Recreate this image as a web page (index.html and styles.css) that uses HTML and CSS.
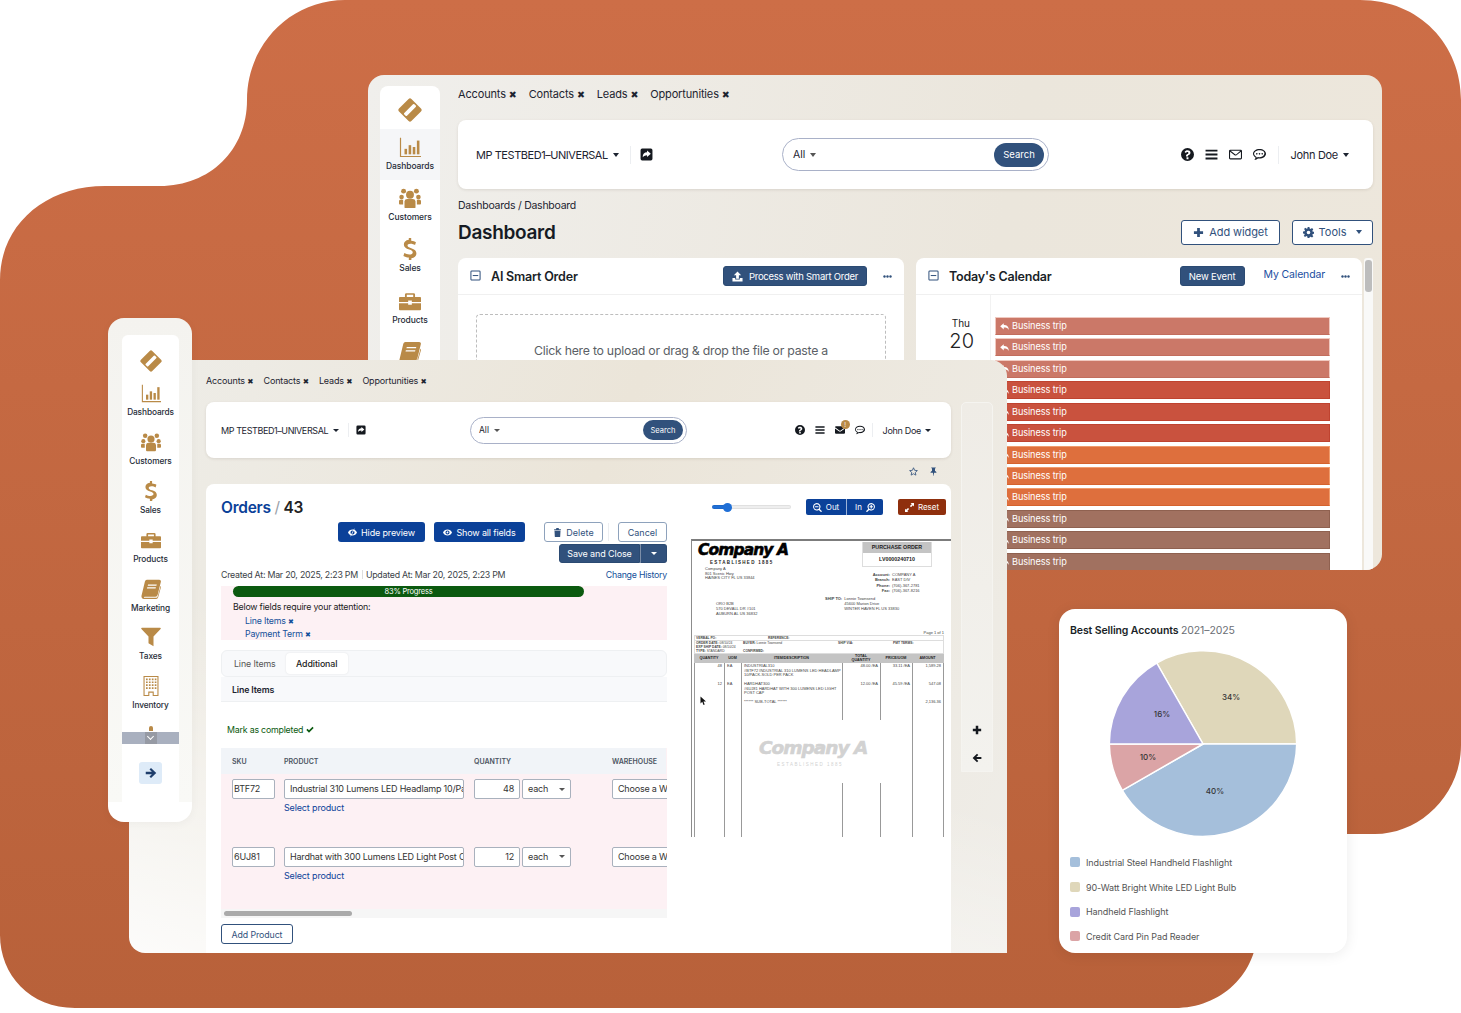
FILE: index.html
```html
<!DOCTYPE html>
<html lang="en">
<head>
    <meta charset="UTF-8">
    <title>Orders and Dashboard</title>
    <link rel="stylesheet" href="styles.css">
</head>
<body>
    <svg class="defs" width="0" height="0">
        <symbol id="i-logo" viewBox="0 0 24 24">
            <path fill-rule="evenodd" d="M13.4 1 23 10.6a2 2 0 0 1 0 2.8L13.4 23a2 2 0 0 1-2.8 0L1 13.4a2 2 0 0 1 0-2.8L10.6 1a2 2 0 0 1 2.8 0ZM15 6.300 6.300 15a1 1 0 0 0 0 1.400l1.300 1.300a1 1 0 0 0 1.400 0L17.700 9a1 1 0 0 0 0-1.400l-1.300-1.300a1 1 0 0 0-1.400 0Z"/>
        </symbol>
        <symbol id="i-chart" viewBox="0 0 24 24">
            <path d="M1 2h1.300v19.700H24V23H1Z"/><rect x="6" y="14" width="2.800" height="6"/><rect x="10.500" y="10" width="2.800" height="10"/><rect x="15" y="12" width="2.800" height="8"/><rect x="19.500" y="5" width="2.800" height="15"/>
        </symbol>
        <symbol id="i-users" viewBox="0 0 24 24">
            <circle cx="12" cy="8.500" r="4.300"/><circle cx="5" cy="4.500" r="2.700"/><circle cx="19" cy="4.500" r="2.700"/><circle cx="2.800" cy="11" r="2.500"/><circle cx="21.200" cy="11" r="2.500"/>
            <path d="M6 15.500a3 3 0 0 1 3-2.500h6a3 3 0 0 1 3 2.500V22a1 1 0 0 1-1 1H7a1 1 0 0 1-1-1Z"/><path d="M0 15.500c0-1 1-1.500 2-1.500h2.500v5H1a1 1 0 0 1-1-1ZM24 15.500c0-1-1-1.500-2-1.500h-2.500v5H23a1 1 0 0 0 1-1Z"/>
        </symbol>
        <symbol id="i-dollar" viewBox="0 0 24 24">
            <path d="M10.700 0h2.600v3c2.300.2 4 .8 5.200 1.500l-1 3.200c-1.300-.7-3-1.400-5-1.400-2.200 0-3.200.9-3.200 2 0 1.300 1.200 2 4 2.900 3.900 1.200 5.700 2.900 5.700 5.600 0 2.600-1.800 4.800-5.500 5.300V24h-2.800v-2.700c-2.300-.1-4.500-.8-5.900-1.700l1-3.200c1.500.9 3.500 1.600 5.500 1.600 2.300 0 3.700-1 3.700-2.300 0-1.400-1.200-2.200-3.900-3.100-3.700-1.200-5.800-2.800-5.800-5.500 0-2.500 1.800-4.600 5.400-5.100Z"/>
        </symbol>
        <symbol id="i-case" viewBox="0 0 24 24">
            <path fill-rule="evenodd" d="M8 3.500h8a1.500 1.500 0 0 1 1.500 1.500v2.500H23a1 1 0 0 1 1 1V13H14v-1.500h-4V13H0V8.500a1 1 0 0 1 1-1h5.500V5A1.500 1.500 0 0 1 8 3.500Zm.5 1.800v2.200h7V5.300Z"/>
            <path d="M0 14.500h10V16h4v-1.500h10V21a1 1 0 0 1-1 1H1a1 1 0 0 1-1-1Z"/>
        </symbol>
        <symbol id="i-book" viewBox="0 0 24 24">
            <path fill-rule="evenodd" d="M7 1h15a2 2 0 0 1 1.800 2.500L20 19a3 3 0 0 1-2.800 2.300H4.500c-1 0-1.500 1.100-.5 1.200h14.500a1.500 1.500 0 0 0 1.400-1.100l3.600-13 .5.300v1l-3.500 12.500A2.500 2.500 0 0 1 18 24H3.500C1.500 24 .2 22 .6 20L4.700 3A3 3 0 0 1 7 1Zm1.500 5.500-.4 1.500h10.400l.4-1.500Zm-1 3.500-.4 1.500h10.400l.4-1.500Z"/>
        </symbol>
        <symbol id="i-funnel" viewBox="0 0 24 24">
            <path d="M1 1h22a.8.8 0 0 1 .5 1.400L15 11.500V23l-6-3.500v-8L.5 2.400A.8.8 0 0 1 1 1Z"/>
        </symbol>
        <symbol id="i-building" viewBox="0 0 24 24">
            <path fill-rule="evenodd" d="M3 0h18v24h-7v-4h-4v4H3Zm1.300 1.300v21.400h4.400V18.700h6.600v4h4.400V1.300Z"/>
            <path d="M6 3h2v2H6Zm3.500 0h2v2h-2Zm3.500 0h2v2h-2Zm3.500 0h2v2h-2ZM6 6.500h2v2H6Zm3.500 0h2v2h-2Zm3.500 0h2v2h-2Zm3.500 0h2v2h-2ZM6 10h2v2H6Zm3.500 0h2v2h-2Zm3.500 0h2v2h-2Zm3.500 0h2v2h-2ZM6 13.500h2v2H6Zm3.500 0h2v2h-2Zm3.500 0h2v2h-2Zm3.500 0h2v2h-2Z"/>
        </symbol>
        <symbol id="i-question" viewBox="0 0 24 24">
            <path fill-rule="evenodd" d="M12 0a12 12 0 1 1 0 24 12 12 0 0 1 0-24Zm-1.800 17v3.600h3.600V17Zm1.900-12.700c-2.500 0-4.400 1.200-5.500 3l2.400 1.800c.7-.9 1.500-1.500 2.800-1.500 1 0 1.900.6 1.900 1.500 0 1-.8 1.400-1.800 2-1.300.7-2.700 1.600-2.700 3.700v.7h3.600c0-1.300.3-1.800 1.500-2.500 1.600-.9 3.200-2 3.200-4.300 0-3-3-4.400-5.400-4.400Z"/>
        </symbol>
        <symbol id="i-bars" viewBox="0 0 24 24">
            <path d="M1 3h22v3.600H1Zm0 7.200h22v3.600H1Zm0 7.200h22V21H1Z"/>
        </symbol>
        <symbol id="i-mail" viewBox="0 0 24 24">
            <path fill-rule="evenodd" d="M2.500 3h19A2.500 2.500 0 0 1 24 5.500v13a2.500 2.500 0 0 1-2.500 2.500h-19A2.500 2.500 0 0 1 0 18.500v-13A2.500 2.500 0 0 1 2.500 3Zm-.5 3.700v11.800c0 .3.200.5.500.5h19c.3 0 .5-.2.500-.5V6.700l-8.200 6.500a3 3 0 0 1-3.600 0Zm1-1.700 8.900 6.800a1 1 0 0 0 1.200 0L21 5Z"/>
        </symbol>
        <symbol id="i-mail-solid" viewBox="0 0 24 24">
            <path d="M2.500 3h19A2.500 2.500 0 0 1 24 5.500L13.500 13a2.500 2.500 0 0 1-3 0L0 5.500A2.500 2.500 0 0 1 2.500 3Z"/><path d="M0 8.300 9.500 15a4 4 0 0 0 5 0L24 8.300v10.200a2.500 2.500 0 0 1-2.500 2.500h-19A2.500 2.500 0 0 1 0 18.500Z"/>
        </symbol>
        <symbol id="i-chat" viewBox="0 0 24 24">
            <path fill-rule="evenodd" d="M12 2c6.600 0 12 3.900 12 8.800s-5.400 8.800-12 8.800c-1 0-2-.1-2.900-.3C7.500 20.900 5.500 22 2.500 22c1.300-1.400 2-2.800 2.200-4.500C1.900 15.900 0 13.500 0 10.800 0 5.900 5.400 2 12 2Zm0 2c-5.700 0-10 3.100-10 6.800 0 2.200 1.500 4 3.800 5.200l1 .5v1.100c0 .3 0 .5-.1.800 1-.6 1.600-1.300 1.900-1.900l3 .4h1c4.900-.2 8.400-3.100 8.400-6.600C22 7.100 17.700 4 12 4Z"/><circle cx="7" cy="10.800" r="1.500"/><circle cx="12" cy="10.800" r="1.500"/><circle cx="17" cy="10.800" r="1.500"/>
        </symbol>
        <symbol id="i-share" viewBox="0 0 24 24">
            <path fill-rule="evenodd" d="M4 1h16a3 3 0 0 1 3 3v16a3 3 0 0 1-3 3H4a3 3 0 0 1-3-3V4a3 3 0 0 1 3-3Zm9 3.500V8C8 8.200 5 11 5 17c.3.200 1.300-3.300 8-3.800v3.300l7-6Z"/>
        </symbol>
        <symbol id="i-minus-box" viewBox="0 0 24 24">
            <path fill="none" stroke="currentColor" stroke-width="2.200" d="M4 2h16a2 2 0 0 1 2 2v16a2 2 0 0 1-2 2H4a2 2 0 0 1-2-2V4a2 2 0 0 1 2-2Z"/><path d="M6 11h12v2.200H6Z"/>
        </symbol>
        <symbol id="i-upload" viewBox="0 0 24 24">
            <path d="M12 1 20 9h-5v8H9V9H4Z"/><path d="M1 15h6v3.500h10V15h6v8H1Z"/>
        </symbol>
        <symbol id="i-dots" viewBox="0 0 24 8">
            <circle cx="4" cy="4" r="3.200"/><circle cx="12" cy="4" r="3.200"/><circle cx="20" cy="4" r="3.200"/>
        </symbol>
        <symbol id="i-plus" viewBox="0 0 24 24">
            <path d="M9 2h6v7h7v6h-7v7H9v-7H2V9h7Z"/>
        </symbol>
        <symbol id="i-gear" viewBox="0 0 24 24">
            <path fill-rule="evenodd" d="M10 0h4l.6 3.500 2.100.9L19.600 2.300l2.800 2.800-2 2.900.9 2.100 3.500.6v4l-3.500.6-.9 2.100 2.100 2.900-2.800 2.800-2.900-2.100-2.100.9L14 24h-4l-.6-3.500-2.100-.9-2.900 2.100-2.800-2.800L3.700 17l-.9-2.100L0 14v-4l3.500-.6.9-2.100-2.100-2.900 2.800-2.800 2.900 2.100 2.100-.9ZM12 8a4 4 0 1 0 0 8 4 4 0 0 0 0-8Z"/>
        </symbol>
        <symbol id="i-reply" viewBox="0 0 24 24">
            <path d="M10 3v5c7.500 0 13 3 13.500 13-2.500-5-6-6.500-13.500-6.500V20L.5 11.500Z"/>
        </symbol>
        <symbol id="i-eye" viewBox="0 0 24 24">
            <path fill-rule="evenodd" d="M12 4c5.500 0 9.800 3.400 12 8-2.200 4.600-6.500 8-12 8S2.200 16.600 0 12c2.200-4.600 6.500-8 12-8Zm0 2.500a5.500 5.500 0 1 0 0 11 5.500 5.500 0 0 0 0-11Zm-.5 2a3 3 0 1 1-3 3c.3 1 2.600.5 3-3Z"/>
        </symbol>
        <symbol id="i-eye-off" viewBox="0 0 24 24">
            <path fill-rule="evenodd" d="M12 4c5.500 0 9.800 3.400 12 8-2.200 4.600-6.500 8-12 8S2.200 16.600 0 12c2.200-4.600 6.500-8 12-8Zm0 2.500a5.500 5.500 0 1 0 0 11 5.500 5.500 0 0 0 0-11Z"/>
            <path fill="none" stroke="currentColor" stroke-width="2" d="M17 2 7 22"/>
        </symbol>
        <symbol id="i-trash" viewBox="0 0 24 24">
            <path d="M9 0h6l1 3h5v3H3V3h5Z"/><path d="M4 7.500h16l-.8 15a1.500 1.500 0 0 1-1.500 1.500H6.300a1.500 1.500 0 0 1-1.500-1.500Z"/>
        </symbol>
        <symbol id="i-zoom-out" viewBox="0 0 24 24">
            <path fill-rule="evenodd" d="M10 0a10 10 0 0 1 8 16l6 6-2.500 2.500-6-6A10 10 0 1 1 10 0Zm0 3a7 7 0 1 0 0 14 7 7 0 0 0 0-14ZM5.500 8.500h9v3h-9Z"/>
        </symbol>
        <symbol id="i-zoom-in" viewBox="0 0 24 24">
            <path fill-rule="evenodd" d="M14 0a10 10 0 0 0-8 16l-6 6 2.500 2.500 6-6A10 10 0 1 0 14 0Zm0 3a7 7 0 1 1 0 14 7 7 0 0 1 0-14Zm-1.500 2.500h3v3h3v3h-3v3h-3v-3h-3v-3h3Z"/>
        </symbol>
        <symbol id="i-expand" viewBox="0 0 24 24">
            <path d="M24 0v9l-3-3-5 5-3-3 5-5-3-3ZM0 24v-9l3 3 5-5 3 3-5 5 3 3Z"/>
        </symbol>
        <symbol id="i-star" viewBox="0 0 24 24">
            <path fill="none" stroke="currentColor" stroke-width="2.200" stroke-linejoin="round" d="m12 2 3 6.800 7.300.8-5.500 4.900 1.600 7.200L12 18l-6.400 3.700 1.600-7.200L1.700 9.600 9 8.800Z"/>
        </symbol>
        <symbol id="i-pin" viewBox="0 0 24 24">
            <path d="M6 1h12v2.500h-2v7c2.500 1 4 2.700 4 5H13.500L12.300 24h-.6l-1.200-8.500H4c0-2.300 1.500-4 4-5v-7H6Z"/>
        </symbol>
        <symbol id="i-arrow" viewBox="0 0 24 24">
            <path d="M12 2 22.500 12 12 22l-3-3 4.700-4.700H1.500V9.700h12.200L9 5Z"/>
        </symbol>
        <symbol id="i-check" viewBox="0 0 24 24">
            <path d="M9 20 1 12l3.500-3.500L9 13 19.500 2.500 23 6Z"/>
        </symbol>
    </svg>

    <div class="stage">
        <svg class="blob" width="1461" height="1008" viewBox="0 0 1461 1008">
            <defs>
                <linearGradient id="blobFill" x1="0" y1="0" x2="0" y2="1">
                    <stop offset="0" stop-color="#cd6e47"/>
                    <stop offset="1" stop-color="#b8613a"/>
                </linearGradient>
            </defs>
            <path fill="url(#blobFill)" d="M345 0H1360C1420 0 1461 45 1461 100V745C1461 795 1420 834 1375 834H1295C1272 834 1258 850 1258 872V925C1258 975 1220 1008 1175 1008H75C30 1008 0 975 0 935V280C0 225 45 186 105 186H160C210 186 247 150 247 100C247 45 290 0 345 0Z"/>
        </svg>

        <!-- back window: dashboard -->
        <section class="window win-back">
            <nav class="rail">
                <div class="rail-logo"><svg class="ic-logo"><use href="#i-logo"/></svg></div>
                <a class="rail-item is-active"><svg class="ic-nav"><use href="#i-chart"/></svg>Dashboards</a>
                <a class="rail-item"><svg class="ic-nav"><use href="#i-users"/></svg>Customers</a>
                <a class="rail-item"><svg class="ic-nav"><use href="#i-dollar"/></svg>Sales</a>
                <a class="rail-item"><svg class="ic-nav"><use href="#i-case"/></svg>Products</a>
                <a class="rail-item"><svg class="ic-nav"><use href="#i-book"/></svg>Marketing</a>
            </nav>
            <div class="win-main">
                <div class="tabs">
                    <span class="tab">Accounts <i class="x">✖</i></span>
                    <span class="tab">Contacts <i class="x">✖</i></span>
                    <span class="tab">Leads <i class="x">✖</i></span>
                    <span class="tab">Opportunities <i class="x">✖</i></span>
                </div>
                <header class="topbar">
                    <div class="topbar-left">
                        <span class="org">MP TESTBED1–UNIVERSAL</span><i class="caret"></i>
                        <span class="vsep"></span>
                        <svg class="ic-top"><use href="#i-share"/></svg>
                    </div>
                    <div class="searchbox">
                        <span class="search-scope">All</span><i class="caret"></i>
                        <button class="search-btn">Search</button>
                    </div>
                    <div class="topbar-right">
                        <svg class="ic-top"><use href="#i-question"/></svg>
                        <svg class="ic-top"><use href="#i-bars"/></svg>
                        <svg class="ic-top"><use href="#i-mail"/></svg>
                        <svg class="ic-top"><use href="#i-chat"/></svg>
                        <span class="vsep"></span>
                        <span class="user">John Doe</span><i class="caret"></i>
                    </div>
                </header>
                <div class="crumbs">Dashboards / Dashboard</div>
                <div class="title-row">
                    <h1 class="page-title">Dashboard</h1>
                    <button class="btn-line btn-widget"><svg class="ic-btn"><use href="#i-plus"/></svg>Add widget</button>
                    <button class="btn-line btn-tools"><svg class="ic-btn"><use href="#i-gear"/></svg>Tools<i class="caret"></i></button>
                </div>
                <div class="widgets">
                    <div class="widget">
                        <div class="widget-head">
                            <svg class="ic-min"><use href="#i-minus-box"/></svg>
                            <h2 class="widget-title">AI Smart Order</h2>
                            <button class="btn-navy btn-process"><svg class="ic-upload"><use href="#i-upload"/></svg>Process with Smart Order</button>
                            <svg class="ic-dots"><use href="#i-dots"/></svg>
                        </div>
                        <div class="dropzone">Click here to upload or drag &amp; drop the file or paste a</div>
                    </div>
                    <div class="widget">
                        <div class="widget-head">
                            <svg class="ic-min"><use href="#i-minus-box"/></svg>
                            <h2 class="widget-title">Today's Calendar</h2>
                            <button class="btn-navy btn-event">New Event</button>
                            <a class="cal-link">My Calendar</a>
                            <svg class="ic-dots"><use href="#i-dots"/></svg>
                        </div>
                        <div class="cal-body">
                            <div class="cal-date"><span class="cal-day">Thu</span><span class="cal-num">20</span></div>
                            <div class="cal-events">
                                <div class="event ev-a"><svg class="ic-reply"><use href="#i-reply"/></svg>Business trip</div>
                                <div class="event ev-a"><svg class="ic-reply"><use href="#i-reply"/></svg>Business trip</div>
                                <div class="event ev-a"><svg class="ic-reply"><use href="#i-reply"/></svg>Business trip</div>
                                <div class="event ev-b"><svg class="ic-reply"><use href="#i-reply"/></svg>Business trip</div>
                                <div class="event ev-b"><svg class="ic-reply"><use href="#i-reply"/></svg>Business trip</div>
                                <div class="event ev-b"><svg class="ic-reply"><use href="#i-reply"/></svg>Business trip</div>
                                <div class="event ev-c"><svg class="ic-reply"><use href="#i-reply"/></svg>Business trip</div>
                                <div class="event ev-c"><svg class="ic-reply"><use href="#i-reply"/></svg>Business trip</div>
                                <div class="event ev-c"><svg class="ic-reply"><use href="#i-reply"/></svg>Business trip</div>
                                <div class="event ev-d"><svg class="ic-reply"><use href="#i-reply"/></svg>Business trip</div>
                                <div class="event ev-d"><svg class="ic-reply"><use href="#i-reply"/></svg>Business trip</div>
                                <div class="event ev-d"><svg class="ic-reply"><use href="#i-reply"/></svg>Business trip</div>
                            </div>
                        </div>
                    </div>
                    <div class="vscroll"><span class="vscroll-thumb"></span></div>
                </div>
            </div>
        </section>

        <!-- front window: order -->
        <section class="window win-front">
            <div class="win-main">
                <div class="tabs">
                    <span class="tab">Accounts <i class="x">✖</i></span>
                    <span class="tab">Contacts <i class="x">✖</i></span>
                    <span class="tab">Leads <i class="x">✖</i></span>
                    <span class="tab">Opportunities <i class="x">✖</i></span>
                </div>
                <header class="topbar">
                    <div class="topbar-left">
                        <span class="org">MP TESTBED1–UNIVERSAL</span><i class="caret"></i>
                        <span class="vsep"></span>
                        <svg class="ic-top"><use href="#i-share"/></svg>
                    </div>
                    <div class="searchbox">
                        <span class="search-scope">All</span><i class="caret"></i>
                        <button class="search-btn">Search</button>
                    </div>
                    <div class="topbar-right">
                        <svg class="ic-top"><use href="#i-question"/></svg>
                        <svg class="ic-top"><use href="#i-bars"/></svg>
                        <span class="mail-wrap"><svg class="ic-top"><use href="#i-mail-solid"/></svg><b class="badge">!</b></span>
                        <svg class="ic-top"><use href="#i-chat"/></svg>
                        <span class="vsep"></span>
                        <span class="user">John Doe</span><i class="caret"></i>
                    </div>
                </header>
                <div class="pin-row">
                    <svg class="ic-pin"><use href="#i-star"/></svg>
                    <svg class="ic-pin"><use href="#i-pin"/></svg>
                </div>
                <div class="order-card">
                    <div class="order-form">
                        <h1 class="order-title"><a>Orders</a> <span class="slash">/</span> 43</h1>
                        <div class="action-row">
                            <button class="btn-blue btn-hide"><svg class="ic-small"><use href="#i-eye-off"/></svg>Hide preview</button>
                            <button class="btn-blue btn-fields"><svg class="ic-small"><use href="#i-eye"/></svg>Show all fields</button>
                            <button class="btn-line btn-delete"><svg class="ic-small"><use href="#i-trash"/></svg>Delete</button>
                            <span class="action-sep"></span>
                            <button class="btn-line btn-cancel">Cancel</button>
                        </div>
                        <div class="save-row">
                            <button class="btn-navy btn-save">Save and Close</button>
                            <button class="btn-navy btn-more"><i class="caret"></i></button>
                        </div>
                        <div class="meta-row">
                            <span>Created At: Mar 20, 2025, 2:23 PM</span><span class="meta-sep"></span><span>Updated At: Mar 20, 2025, 2:23 PM</span>
                            <a class="history">Change History</a>
                        </div>
                        <div class="attention">
                            <div class="progress">83% Progress</div>
                            <p class="attn-text">Below fields require your attention:</p>
                            <a class="attn-link">Line Items <i class="x">✖</i></a>
                            <a class="attn-link">Payment Term <i class="x">✖</i></a>
                        </div>
                        <div class="form-tabs">
                            <span class="form-tab">Line Items</span>
                            <span class="form-tab is-active">Additional</span>
                        </div>
                        <div class="section-bar">Line Items</div>
                        <div class="completed">Mark as completed <svg class="ic-check"><use href="#i-check"/></svg></div>
                        <div class="lines">
                            <div class="lines-head">
                                <span class="col-sku">SKU</span>
                                <span class="col-product">PRODUCT</span>
                                <span class="col-qty">QUANTITY</span>
                                <span class="col-wh">WAREHOUSE</span>
                            </div>
                            <div class="line-row">
                                <div class="col-sku"><span class="field f-sku">BTF72</span></div>
                                <div class="col-product"><span class="field f-product">Industrial 310 Lumens LED Headlamp 10/Pack</span><a class="select-link">Select product</a></div>
                                <div class="col-qty"><span class="field f-qty">48</span><span class="field f-unit">each<i class="caret"></i></span></div>
                                <div class="col-wh"><span class="field f-wh">Choose a Warehouse</span></div>
                            </div>
                            <div class="line-row">
                                <div class="col-sku"><span class="field f-sku">6UJ81</span></div>
                                <div class="col-product"><span class="field f-product">Hardhat with 300 Lumens LED Light Post Cap</span><a class="select-link">Select product</a></div>
                                <div class="col-qty"><span class="field f-qty">12</span><span class="field f-unit">each<i class="caret"></i></span></div>
                                <div class="col-wh"><span class="field f-wh">Choose a Warehouse</span></div>
                            </div>
                            <div class="hscroll"><span class="hscroll-thumb"></span></div>
                        </div>
                        <button class="btn-line btn-add">Add Product</button>
                    </div>

                    <div class="preview">
                        <div class="preview-tools">
                            <span class="slider"><i class="slider-knob"></i></span>
                            <span class="zoom-group">
                                <span class="zoom-part"><svg class="ic-small"><use href="#i-zoom-out"/></svg>Out</span>
                                <span class="zoom-part zoom-in">In<svg class="ic-small"><use href="#i-zoom-in"/></svg></span>
                            </span>
                            <button class="btn-reset"><svg class="ic-small"><use href="#i-expand"/></svg>Reset</button>
                        </div>
                        <div class="doc">
                            <div class="doc-top">
                                <div class="doc-brand">
                                    <div class="doc-logo">Company A</div>
                                    <div class="doc-est">ESTABLISHED 1885</div>
                                    <div class="doc-addr">Company A<br>801 Scenic Hwy<br>HAINES CITY FL US 33844</div>
                                </div>
                                <div class="doc-right-col">
                                    <div class="doc-po">
                                        <div class="doc-po-title">PURCHASE ORDER</div>
                                        <div class="doc-po-num">LV0000240710</div>
                                    </div>
                                    <div class="doc-acct">
                                        <span class="doc-k">Account:</span><span>COMPANY A</span>
                                        <span class="doc-k">Branch:</span><span>EAST DIV</span>
                                        <span class="doc-k">Phone:</span><span>(706)-367-2781</span>
                                        <span class="doc-k">Fax:</span><span>(706)-367-8216</span>
                                    </div>
                                </div>
                            </div>
                            <div class="doc-parties">
                                <div class="doc-bill">ORO B2B<br>570 DEVALL DR #101<br>AUBURN AL US 36832</div>
                                <div class="doc-ship"><b>SHIP TO:</b><span>Lonnie Townsend<br>45600 Marion Drive<br>WINTER HAVEN FL US 33830</span></div>
                            </div>
                            <div class="doc-page">Page 1 of 1</div>
                            <div class="doc-info">
                                <div class="doc-info-top"><b>VERBAL PO:</b><b>REFERENCE:</b></div>
                                <div class="doc-info-grid">
                                    <div><b>ORDER DATE:</b> 08/10/24<br><b>EXP SHIP DATE:</b> 08/10/24<br><b>TYPE:</b> STANDARD</div>
                                    <div><b>BUYER:</b> Lonnie Townsend<br><br><b>CONFIRMED:</b></div>
                                    <div><b>SHIP VIA:</b></div>
                                    <div><b>PMT TERMS:</b></div>
                                </div>
                            </div>
                            <div class="doc-thead">
                                <b>QUANTITY</b><b>UOM</b><b>ITEM/DESCRIPTION</b><b>TOTAL<br>QUANTITY</b><b>PRICE/UOM</b><b>AMOUNT</b>
                            </div>
                            <div class="doc-tbody">
                                <div class="doc-col doc-right"><div class="doc-cell">48</div><div class="doc-cell">12</div></div>
                                <div class="doc-col"><div class="doc-cell">EA</div><div class="doc-cell">EA</div></div>
                                <div class="doc-col"><div class="doc-cell">INDUSTRIAL310<br>#BTF72 INDUSTRIAL 310 LUMENS LED HEADLAMP<br>10/PACK-SOLD PER PACK</div><div class="doc-cell">HARDHAT300<br>#6UJ81 HARDHAT WITH 300 LUMENS LED LIGHT<br>POST CAP</div><div class="doc-cell">****** SUB-TOTAL ******</div></div>
                                <div class="doc-col doc-right"><div class="doc-cell">48.00 /EA</div><div class="doc-cell">12.00 /EA</div></div>
                                <div class="doc-col doc-right"><div class="doc-cell">33.11 /EA</div><div class="doc-cell">45.59 /EA</div></div>
                                <div class="doc-col doc-right"><div class="doc-cell">1,589.28</div><div class="doc-cell">547.08</div><div class="doc-cell">2,136.36</div></div>
                            </div>
                            <div class="doc-mark">
                                <div class="doc-mark-logo">Company A</div>
                                <div class="doc-mark-est">ESTABLISHED 1885</div>
                            </div>
                            <svg class="doc-cursor" viewBox="0 0 12 18"><path d="M1 0v14l3.500-3.300L7 17l2.400-1-2.500-5.800H12Z"/></svg>
                        </div>
                    </div>
                </div>
            </div>
            <aside class="side-dock">
                <svg class="ic-dock"><use href="#i-plus"/></svg>
                <svg class="ic-dock ic-back"><use href="#i-arrow"/></svg>
            </aside>
        </section>

        <!-- floating nav panel -->
        <nav class="float-nav">
            <div class="float-col">
                <div class="rail-logo"><svg class="ic-logo"><use href="#i-logo"/></svg></div>
                <a class="rail-item"><svg class="ic-nav"><use href="#i-chart"/></svg>Dashboards</a>
                <a class="rail-item"><svg class="ic-nav"><use href="#i-users"/></svg>Customers</a>
                <a class="rail-item"><svg class="ic-nav"><use href="#i-dollar"/></svg>Sales</a>
                <a class="rail-item"><svg class="ic-nav"><use href="#i-case"/></svg>Products</a>
                <a class="rail-item"><svg class="ic-nav"><use href="#i-book"/></svg>Marketing</a>
                <a class="rail-item"><svg class="ic-nav"><use href="#i-funnel"/></svg>Taxes</a>
                <a class="rail-item"><svg class="ic-nav"><use href="#i-building"/></svg>Inventory</a>
                <div class="rail-peek"></div>
                <div class="rail-more"><span class="more-chevron"></span></div>
                <div class="rail-toggle"><svg class="ic-toggle"><use href="#i-arrow"/></svg></div>
            </div>
        </nav>

        <!-- chart card -->
        <section class="chart-card">
            <h3 class="chart-title">Best Selling Accounts <span>2021–2025</span></h3>
            <svg class="pie" width="188" height="188" viewBox="0 0 188 188">
                <path fill="#dfd7ba" d="M94 94 47.700 13A93.700 93.700 0 0 1 187.700 94Z"/>
                <path fill="#a5bfdb" d="M94 94H187.700A93.700 93.700 0 0 1 13.300 140.300Z"/>
                <path fill="#dba4a6" d="M94 94 13.300 140.300A93.700 93.700 0 0 1 .3 94Z"/>
                <path fill="#a8a4db" d="M94 94H.3A93.700 93.700 0 0 1 47.700 13Z"/>
                <text x="122" y="50">34%</text>
                <text x="106" y="144">40%</text>
                <text x="39" y="110">10%</text>
                <text x="53" y="67">16%</text>
            </svg>
            <ul class="legend">
                <li><i class="sw sw-blue"></i>Industrial Steel Handheld Flashlight</li>
                <li><i class="sw sw-beige"></i>90-Watt Bright White LED Light Bulb</li>
                <li><i class="sw sw-purple"></i>Handheld Flashlight</li>
                <li><i class="sw sw-pink"></i>Credit Card Pin Pad Reader</li>
            </ul>
        </section>
    </div>
</body>
</html>
```

FILE: styles.css
```css
* {
    margin: 0;
    padding: 0;
    box-sizing: border-box;
}

body {
    background: #fff;
    font-family: Inter, "Liberation Sans", sans-serif;
    color: #1d2430;
    overflow: hidden;
}

button {
    font-family: inherit;
    border: none;
    cursor: pointer;
}

i {
    font-style: normal;
}

.defs {
    position: absolute;
}

.stage {
    position: relative;
    width: 1461px;
    height: 1013px;
    overflow: hidden;
}

.blob {
    position: absolute;
    left: 0;
    top: 0;
}

/* windows */
.window {
    position: absolute;
    overflow: hidden;
    display: flex;
    background: linear-gradient(100deg, #f0efec 0%, #ebe6dc 60%, #ede7dc 100%);
}

.win-back {
    left: 368px;
    top: 75px;
    width: 1014px;
    height: 495px;
    border-radius: 16px;
    padding: 11px 9px 0 12px;
    gap: 18px;
}

.win-front {
    left: 129px;
    top: 360px;
    width: 878px;
    height: 593px;
    border-radius: 0 16px 0 16px;
    padding: 0 0 0 77px;
    gap: 10px;
    background:
        linear-gradient(195deg, rgba(255, 255, 255, 0) 55%, rgba(255, 255, 255, 0.85) 100%),
        linear-gradient(115deg, #eeede8, #ebe5d9 45%, #efede8 100%);
}

.win-main {
    min-width: 0;
    flex: 1;
    display: flex;
    flex-direction: column;
}

.win-front .win-main {
    flex: 0 0 745px;
}

/* side rail */
.rail {
    width: 60px;
    background: #fff;
    border-radius: 8px 8px 0 0;
    display: flex;
    flex-direction: column;
    align-items: stretch;
}

.rail-logo {
    height: 43px;
    display: flex;
    align-items: center;
    justify-content: center;
    padding-top: 5px;
}

.ic-logo {
    width: 24px;
    height: 24px;
    fill: #b98a47;
}

.ic-nav {
    width: 22px;
    height: 22px;
    fill: #b98a47;
    margin-bottom: 3px;
}

.rail-item {
    height: 51.400px;
    padding-bottom: 3px;
    display: flex;
    flex-direction: column;
    align-items: center;
    justify-content: center;
    font-size: 8.500px;
    font-weight: 500;
    color: #262c38;
    letter-spacing: -0.1px;
}

.rail-item.is-active {
    background: #f5f6f8;
}

/* tab strip */
.tabs {
    display: flex;
    gap: 12px;
    height: 34px;
    align-items: flex-start;
    font-size: 11px;
    line-height: 16px;
    letter-spacing: -0.15px;
}

.x {
    font-family: "DejaVu Sans", sans-serif;
    font-size: 9.500px;
}

.win-front .tabs {
    height: 42px;
    padding-top: 13px;
    gap: 10px;
    font-size: 9px;
}

.win-front .tabs .x {
    font-size: 7.500px;
}

/* header bar */
.topbar {
    height: 69px;
    background: #fff;
    border-radius: 8px;
    box-shadow: 0 1px 3px rgba(70, 60, 40, 0.12);
    display: flex;
    align-items: center;
    font-size: 11px;
    flex: none;
}

.topbar-left {
    width: 324px;
    padding-left: 18px;
    display: flex;
    align-items: center;
}

.org {
    letter-spacing: -0.45px;
}

.caret {
    display: inline-block;
    width: 0;
    height: 0;
    border-left: 3.500px solid transparent;
    border-right: 3.500px solid transparent;
    border-top: 4px solid currentColor;
    margin-left: 5px;
}

.vsep {
    width: 1px;
    height: 18px;
    background: #eceef1;
    margin: 0 9px 0 11px;
}

.ic-top {
    width: 13px;
    height: 13px;
    fill: #15191f;
}

.searchbox {
    width: 267px;
    height: 33px;
    border: 1px solid #a9b1c8;
    border-radius: 17px;
    display: flex;
    align-items: center;
    padding: 0 4px 0 10px;
}

.search-scope {
    font-size: 10.500px;
}

.searchbox .caret {
    color: #555;
}

.search-btn {
    margin-left: auto;
    width: 50px;
    height: 24px;
    background: #31517c;
    color: #fff;
    border-radius: 12px;
    font-size: 9.500px;
}

.topbar-right {
    margin-left: auto;
    padding-right: 24px;
    display: flex;
    align-items: center;
    gap: 11px;
}

.topbar-right .vsep {
    margin: 0 0 0 1px;
}

.topbar-right .user {
    margin-right: -11px;
    letter-spacing: -0.3px;
}

.crumbs {
    margin-top: 10px;
    font-size: 10.500px;
    line-height: 13px;
    letter-spacing: -0.25px;
}

.title-row {
    margin-top: 5px;
    height: 30px;
    display: flex;
    align-items: center;
    gap: 12px;
}

.page-title {
    font-size: 19px;
    font-weight: 600;
    letter-spacing: -0.3px;
    margin-right: auto;
    color: #161b24;
}

.btn-line {
    background: #fff;
    border: 1px solid #31517c;
    border-radius: 3px;
    color: #31517c;
    display: inline-flex;
    align-items: center;
    justify-content: center;
}

.btn-widget {
    width: 99px;
    height: 25px;
    font-size: 11px;
    gap: 5px;
    letter-spacing: -0.1px;
}

.btn-tools {
    width: 81px;
    height: 25px;
    font-size: 11px;
    gap: 5px;
}

.ic-btn {
    width: 11px;
    height: 11px;
    fill: #31517c;
}

.widgets {
    margin-top: 11px;
    display: flex;
    gap: 12px;
    flex: 1;
    min-height: 0;
}

.widget {
    width: 446px;
    background: #fff;
    border-radius: 8px 8px 0 0;
    flex: none;
}

.widget-head {
    height: 37px;
    padding: 0 12px 0 12px;
    border-bottom: 1px solid #f0f0f0;
    display: flex;
    align-items: center;
}

.ic-min {
    width: 11px;
    height: 11px;
    color: #31517c;
    fill: #31517c;
    margin-right: 10px;
    margin-top: -2px;
}

.widget-title {
    font-size: 12.500px;
    font-weight: 600;
    letter-spacing: -0.2px;
    color: #1a1f28;
    margin-right: auto;
}

.btn-navy {
    background: #31517c;
    color: #fff;
    border: 1px solid #2b4a72;
    border-radius: 3px;
}

.btn-process {
    width: 144px;
    height: 20px;
    font-size: 9.500px;
    letter-spacing: -0.25px;
    display: flex;
    align-items: center;
    justify-content: center;
    gap: 6px;
}

.ic-upload {
    width: 11px;
    height: 11px;
    fill: #fff;
}

.ic-dots {
    width: 9px;
    height: 3px;
    fill: #31517c;
    margin-left: 16px;
}

.dropzone {
    margin: 19px 18px 0;
    height: 120px;
    border: 1px dashed #bdbdbd;
    border-radius: 4px;
    padding-top: 28px;
    text-align: center;
    font-size: 12.300px;
    letter-spacing: -0.25px;
    color: #5b5f66;
}

.btn-event {
    width: 65px;
    height: 20px;
    font-size: 9.500px;
    letter-spacing: -0.15px;
}

.cal-link {
    margin-left: 19px;
    color: #1c4ea1;
    font-size: 10.500px;
    margin-top: -4px;
    letter-spacing: -0.15px;
}

.cal-body {
    display: flex;
}

.cal-date {
    width: 74px;
    padding: 22px 16px 0 0;
    display: flex;
    flex-direction: column;
    align-items: flex-end;
    color: #222;
}

.cal-day {
    font-size: 10px;
    margin-right: 4px;
    line-height: 13px;
}

.cal-num {
    font-size: 20px;
    line-height: 22px;
    font-weight: 300;
}

.cal-events {
    width: 340px;
    padding: 22px 0 0 4px;
    border-left: 1px solid #f2f2f2;
    height: 220px;
}

.event {
    height: 18px;
    margin-bottom: 3.430px;
    color: #fff;
    font-size: 9.200px;
    line-height: 16px;
    padding-left: 4px;
    border: 1px solid;
    letter-spacing: -0.1px;
    display: flex;
    align-items: center;
    gap: 3px;
}

.ic-reply {
    width: 9px;
    height: 9px;
    fill: #fff;
}

.ev-a {
    background: #cb7868;
    border-color: #f0c9c0;
    border-bottom-color: #c26d5d;
}

.ev-b {
    background: #c9523e;
    border-color: #bf4330;
}

.ev-c {
    background: #de6f3d;
    border-color: #f09b6c;
    border-bottom-color: #d5622d;
}

.ev-d {
    background: #a17160;
    border-color: #8f6150;
}

.vscroll {
    width: 9px;
    margin-left: -10px;
    background: #f9f9f8;
    border-radius: 3px 3px 0 0;
}

.vscroll-thumb {
    display: block;
    margin: 2px 1px;
    height: 32px;
    background: #bdbdbd;
    border-radius: 3px;
}

/* front window */
.win-front .topbar {
    height: 56px;
    font-size: 9px;
}

.win-front .topbar-left {
    width: 264px;
    padding-left: 15px;
}

.win-front .org {
    letter-spacing: -0.4px;
}

.win-front .vsep {
    height: 14px;
    margin: 0 7px 0 9px;
}

.win-front .ic-top {
    width: 10px;
    height: 10px;
}

.win-front .caret {
    border-left-width: 3px;
    border-right-width: 3px;
    border-top-width: 3px;
}

.win-front .searchbox {
    width: 217px;
    height: 27px;
    padding: 0 3px 0 8px;
}

.win-front .search-scope {
    font-size: 8.500px;
}

.win-front .search-btn {
    width: 40px;
    height: 20px;
    font-size: 7.500px;
}

.win-front .topbar-right {
    padding-right: 20px;
    gap: 10px;
}

.win-front .topbar-right .vsep {
    margin: 0 0 0 -3px;
}

.win-front .topbar-right .user {
    margin-right: -11px;
}

.mail-wrap {
    position: relative;
    display: flex;
}

.badge {
    position: absolute;
    right: -5px;
    top: -5px;
    width: 9px;
    height: 9px;
    border-radius: 50%;
    background: #b98a47;
    color: #fff;
    font-size: 6px;
    line-height: 9px;
    text-align: center;
    font-weight: 400;
}

.pin-row {
    height: 26px;
    display: flex;
    justify-content: flex-end;
    align-items: center;
    padding: 0 13px 0 0;
    gap: 11px;
}

.ic-pin {
    width: 9px;
    height: 9px;
    color: #31517c;
    fill: #31517c;
}

.order-card {
    flex: 1;
    background: #fff;
    border-radius: 8px 8px 0 0;
    display: flex;
    padding-left: 15px;
    min-height: 0;
    gap: 24px;
}

.order-form {
    width: 446px;
    flex: none;
    display: flex;
    flex-direction: column;
}

.order-title {
    margin-top: 14px;
    font-size: 15.500px;
    line-height: 20px;
    font-weight: 600;
    letter-spacing: -0.25px;
    color: #222;
}

.order-title a {
    color: #0b4199;
}

.slash {
    color: #9aa0a8;
    font-weight: 400;
}

.action-row {
    margin-top: 4px;
    display: flex;
    justify-content: flex-end;
    align-items: center;
}

.btn-blue {
    background: #0b4199;
    color: #fff;
    border-radius: 3px;
    height: 20px;
    font-size: 9px;
    letter-spacing: -0.15px;
    display: inline-flex;
    align-items: center;
    justify-content: center;
    gap: 4px;
}

.ic-small {
    width: 9px;
    height: 9px;
    fill: currentColor;
    color: inherit;
}

.btn-hide {
    width: 87px;
}

.btn-fields {
    width: 91px;
    margin-left: 9px;
    margin-right: 19px;
}

.btn-delete {
    width: 59px;
    height: 20px;
    font-size: 9px;
    gap: 4px;
    color: #31517c;
    border-color: #8ea2bc;
}

.btn-cancel {
    width: 49px;
    height: 20px;
    font-size: 9px;
    border-color: #8ea2bc;
}

.action-sep {
    width: 1px;
    height: 18px;
    background: #eceef1;
    margin: 0 9px 0 5px;
}

.save-row {
    margin-top: 2px;
    display: flex;
    justify-content: flex-end;
}

.btn-save {
    width: 81px;
    height: 19px;
    font-size: 9px;
    letter-spacing: -0.1px;
    border-radius: 3px 0 0 3px;
}

.btn-more {
    width: 27px;
    height: 19px;
    border-radius: 0 3px 3px 0;
    border-left: 1px solid #7d8ea8;
    display: flex;
    align-items: center;
    justify-content: center;
}

.btn-more .caret {
    margin: 0;
}

.meta-row {
    margin-top: 5px;
    height: 12px;
    display: flex;
    align-items: center;
    font-size: 8.800px;
    letter-spacing: -0.24px;
    color: #3b3f47;
}

.meta-sep {
    width: 1px;
    height: 9px;
    background: #ddd;
    margin: 0 3px 0 4px;
}

.history {
    margin-left: auto;
    color: #14509a;
}

.attention {
    margin-top: 6px;
    height: 54px;
    background: #fdf1f4;
    padding: 0 12px;
    font-size: 8.800px;
    letter-spacing: -0.2px;
    flex: none;
}

.progress {
    width: 351px;
    height: 11px;
    background: #0b5a0f;
    border-radius: 6px;
    color: #fff;
    text-align: center;
    font-size: 7.500px;
    line-height: 12px;
}

.attn-text {
    margin-top: 3px;
    line-height: 13px;
    color: #222;
}

.attn-link {
    display: block;
    margin-left: 12px;
    line-height: 13px;
    height: 13px;
    color: #14509a;
}

.attn-link:first-of-type {
    margin-top: 1px;
}

.attn-link .x {
    font-size: 7px;
}

.form-tabs {
    margin-top: 10px;
    height: 27px;
    background: #f8f9fb;
    border: 1px solid #eef0f2;
    border-radius: 6px;
    display: flex;
    align-items: center;
    padding-left: 3px;
    font-size: 8.800px;
    flex: none;
    letter-spacing: -0.1px;
}

.form-tab {
    color: #555;
    padding: 0 9px;
    line-height: 21px;
}

.form-tab.is-active {
    margin-left: 1px;
    width: 62px;
    text-align: center;
    background: #fff;
    border-radius: 4px;
    box-shadow: 0 0 2px rgba(0, 0, 0, 0.1);
    color: #222;
    font-weight: 500;
    padding: 0;
}

.section-bar {
    height: 25px;
    background: #f8f9fb;
    border-bottom: 1px solid #eef0f2;
    padding-left: 11px;
    font-size: 8.800px;
    line-height: 25px;
    font-weight: 600;
    letter-spacing: -0.15px;
    flex: none;
}

.completed {
    margin-top: 22px;
    padding-left: 6px;
    font-size: 8.800px;
    line-height: 12px;
    color: #0b5a0f;
    letter-spacing: -0.2px;
    flex: none;
}

.ic-check {
    width: 8px;
    height: 8px;
    fill: #0b5a0f;
    vertical-align: -1px;
}

.lines {
    margin-top: 12px;
    background: #fdf1f4;
    flex: none;
    overflow: hidden;
}

.lines-head {
    height: 26px;
    margin-right: 1px;
    background: #f1f4f8;
    display: flex;
    align-items: center;
    font-size: 7px;
    font-weight: 600;
    color: #4c5462;
    padding-top: 1px;
}

.line-row {
    height: 67.500px;
    padding-top: 5px;
    display: flex;
    align-items: flex-start;
}

.col-sku {
    width: 63px;
    padding-left: 11px;
    flex: none;
}

.col-product {
    width: 190px;
    flex: none;
}

.col-qty {
    width: 138px;
    flex: none;
    display: flex;
}

.col-wh {
    flex: none;
    width: 90px;
}

.field {
    display: block;
    height: 20px;
    background: #fff;
    border: 1px solid #a9b1bd;
    border-radius: 2px;
    font-size: 9px;
    line-height: 18px;
    color: #333;
    white-space: nowrap;
    overflow: hidden;
    letter-spacing: -0.2px;
}

.f-sku {
    width: 43px;
    padding-left: 1px;
}

.f-product {
    width: 180px;
    padding: 0 4px 0 5px;
}

.f-qty {
    width: 46px;
    padding-right: 5px;
    text-align: right;
}

.f-unit {
    width: 49px;
    margin-left: 2px;
    padding-left: 5px;
    display: flex;
    align-items: center;
}

.f-unit .caret {
    margin-left: auto;
    margin-right: 5px;
    color: #555;
}

.f-wh {
    width: 90px;
    padding-left: 5px;
}

.select-link {
    display: block;
    margin-top: 3px;
    font-size: 9px;
    line-height: 12px;
    color: #0b4199;
    letter-spacing: -0.15px;
}

.hscroll {
    height: 9px;
    background: #f6f6f6;
    padding: 2px 0 0 3px;
}

.hscroll-thumb {
    display: block;
    width: 128px;
    height: 5px;
    background: #aaa;
    border-radius: 3px;
}

.btn-add {
    margin-top: 6px;
    width: 72px;
    height: 20px;
    font-size: 8.800px;
    letter-spacing: -0.1px;
}

/* preview side */
.preview {
    width: 260px;
    flex: none;
}

.preview-tools {
    height: 55px;
    padding: 15px 5px 0 21px;
    display: flex;
    align-items: flex-start;
}

.slider {
    position: relative;
    width: 79px;
    height: 4px;
    margin-top: 6px;
    border-radius: 2px;
    background: linear-gradient(90deg, #1f6fd6 20%, #eee 20%);
    box-shadow: inset 0 0 0 1px rgba(0, 0, 0, 0.06);
}

.slider-knob {
    position: absolute;
    left: 11px;
    top: -2.500px;
    width: 9px;
    height: 9px;
    border-radius: 50%;
    background: #1f6fd6;
}

.zoom-group {
    margin-left: 15px;
    width: 77px;
    height: 16px;
    display: flex;
    background: #0b4199;
    border-radius: 2px;
    color: #fff;
    font-size: 8px;
}

.zoom-part {
    flex: none;
    width: 40px;
    display: flex;
    align-items: center;
    justify-content: center;
    gap: 4px;
}

.zoom-in {
    width: 37px;
    border-left: 1px solid #9db3d8;
}

.btn-reset {
    margin-left: 15px;
    width: 48px;
    height: 16px;
    background: #8f2f0d;
    color: #fff;
    border-radius: 2px;
    font-size: 8px;
    display: flex;
    align-items: center;
    justify-content: center;
    gap: 4px;
}

/* scanned document */
.doc {
    position: relative;
    height: 298px;
    background: #fff;
    border-top: 2px solid #7c7c7c;
    border-left: 1px solid #8c8c8c;
    font-family: "Liberation Sans", sans-serif;
    font-size: 4px;
    line-height: 5px;
    color: #444;
    overflow: hidden;
}

.doc-top {
    display: flex;
    justify-content: space-between;
    height: 53px;
}

.doc-brand {
    padding-left: 6px;
}

.doc-logo {
    font-family: "DejaVu Sans", sans-serif;
    font-size: 15.500px;
    font-weight: 700;
    font-style: italic;
    line-height: 18px;
    letter-spacing: -0.9px;
    color: #000;
    white-space: nowrap;
    -webkit-text-stroke: 0.6px #000;
}

.doc-est {
    margin-top: 1px;
    font-size: 4.500px;
    font-weight: 700;
    letter-spacing: 1.300px;
    padding-left: 12px;
    color: #222;
}

.doc-addr {
    margin: 2px 0 0 7px;
    line-height: 4.700px;
}

.doc-right-col {
    width: 89px;
    padding-top: 1px;
}

.doc-po {
    width: 70px;
    text-align: center;
    border: 1px solid #ddd;
    border-top: none;
    height: 25px;
    font-weight: 700;
}

.doc-po-title {
    height: 11px;
    background: #c4c4c4;
    font-size: 5.300px;
    line-height: 11px;
    color: #222;
}

.doc-po-num {
    font-size: 5.300px;
    line-height: 13px;
    color: #222;
}

.doc-acct {
    display: grid;
    grid-template-columns: 28px 1fr;
    column-gap: 2px;
    margin-top: 5px;
    line-height: 5.300px;
}

.doc-k {
    text-align: right;
    font-weight: 700;
}

.doc-parties {
    display: grid;
    grid-template-columns: 133px 1fr;
    height: 36px;
}

.doc-bill {
    margin: 7px 0 0 24px;
}

.doc-ship {
    display: flex;
    gap: 2px;
    margin-top: 2px;
}

.doc-page {
    padding-right: 7px;
    text-align: right;
}

.doc-info {
    margin: 0 7px 0 2px;
    border: 1px solid #ddd;
    font-size: 3.300px;
    line-height: 4px;
}

.doc-info-top {
    display: grid;
    grid-template-columns: 72px 1fr;
    padding-left: 1px;
    border-bottom: 1px solid #ddd;
    height: 5px;
}

.doc-info-grid {
    display: grid;
    grid-template-columns: 47px 95px 55px 1fr;
    height: 12px;
    padding-left: 1px;
    overflow: hidden;
}

.doc-thead {
    display: grid;
    grid-template-columns: 30px 17px 101px 38px 32px 31px;
    margin: 0 7px 0 2px;
    height: 9px;
    background: #c4c4c4;
    font-size: 3.700px;
    line-height: 3.900px;
    text-align: center;
    align-items: center;
    color: #222;
}

.doc-tbody {
    display: grid;
    grid-template-columns: 30px 17px 101px 38px 32px 31px;
    margin: 0 7px 0 2px;
    height: 180px;
    border-right: 1px solid #999;
}

.doc-col {
    border-left: 1px solid #999;
    padding: 1px 2px 0;
}

.doc-right {
    text-align: right;
}

.doc-cell {
    height: 18px;
    line-height: 4.700px;
    white-space: nowrap;
}

.doc-mark {
    position: absolute;
    left: 53px;
    top: 179px;
    width: 140px;
    height: 63px;
    padding: 17px 0 0 14px;
    background: #fff;
    color: #d2d2d2;
}

.doc-mark-logo {
    font-family: "DejaVu Sans", sans-serif;
    font-size: 18.500px;
    font-weight: 700;
    font-style: italic;
    line-height: 22px;
    letter-spacing: -1px;
    white-space: nowrap;
    -webkit-text-stroke: 0.6px #d2d2d2;
}

.doc-mark-est {
    margin-top: 3px;
    font-size: 4.500px;
    letter-spacing: 1.500px;
    padding-left: 18px;
}

.doc-cursor {
    position: absolute;
    left: 8px;
    top: 155px;
    width: 6px;
    height: 10px;
    fill: #111;
}

/* right dock of front window */
.side-dock {
    flex: none;
    width: 32px;
    height: 370px;
    margin-top: 42px;
    background: linear-gradient(180deg, #efece6, #f3f2ee);
    border: 1px solid #f5f4f0;
    border-radius: 5px 5px 0 0;
    display: flex;
    flex-direction: column;
    align-items: center;
    justify-content: flex-end;
    gap: 18px;
    padding-bottom: 8px;
}

.ic-dock {
    width: 10px;
    height: 10px;
    fill: #15191f;
}

.ic-back {
    transform: scaleX(-1);
}

/* floating nav */
.float-nav {
    position: absolute;
    left: 108px;
    top: 318px;
    width: 84px;
    height: 504px;
    border-radius: 16px;
    background: linear-gradient(180deg, #f4f3ef 0, #f9f9f6 484px, #fff 484px);
    padding: 17px 13px 0 14px;
    box-shadow: 0 2px 10px rgba(0, 0, 0, 0.04);
}

.float-col {
    height: 467px;
    background: #fff;
    border-radius: 6px 6px 0 0;
    display: flex;
    flex-direction: column;
}

.float-col .rail-logo {
    height: 42px;
    padding-top: 10px;
}

.float-col .ic-logo {
    width: 22px;
    height: 22px;
}

.float-col .rail-item {
    height: 48.800px;
    padding-bottom: 2px;
    font-size: 8.300px;
}

.float-col .ic-nav {
    width: 20px;
    height: 20px;
    margin-bottom: 4px;
}

.rail-peek {
    width: 4px;
    height: 5px;
    margin: 7px auto 0;
    border-radius: 2px 2px 0 0;
    background: #b98a47;
}

.rail-more {
    height: 12px;
    margin-top: 1px;
    background: linear-gradient(#969aa4, #969aa4) center / 12px 12px no-repeat, #a9b0bf;
    display: flex;
    align-items: center;
    justify-content: center;
}

.more-chevron {
    width: 5px;
    height: 5px;
    border-right: 1px solid #fff;
    border-bottom: 1px solid #fff;
    transform: rotate(45deg);
    margin-top: -2px;
}

.rail-toggle {
    margin: 18px auto 0;
    width: 23px;
    height: 22px;
    background: #deebf8;
    border-radius: 3px;
    display: flex;
    align-items: center;
    justify-content: center;
}

.ic-toggle {
    width: 12px;
    height: 12px;
    fill: #1e3d6b;
}

/* chart card */
.chart-card {
    position: absolute;
    left: 1059px;
    top: 609px;
    width: 288px;
    height: 344px;
    background: #fff;
    border-radius: 16px;
    box-shadow: 0 2px 14px rgba(0, 0, 0, 0.08);
    padding: 15px 11px 0;
}

.chart-title {
    font-size: 10.500px;
    line-height: 14px;
    font-weight: 600;
    letter-spacing: -0.1px;
    color: #1a1f28;
}

.chart-title span {
    font-weight: 400;
    color: #6a6e74;
}

.pie {
    display: block;
    margin: 12px auto 0;
}

.pie path {
    stroke: #fff;
    stroke-width: 1.500px;
}

.pie text {
    font-size: 8px;
    font-weight: 500;
    fill: #333;
    text-anchor: middle;
}

.legend {
    list-style: none;
    margin-top: 12px;
    font-size: 9px;
    color: #555;
    letter-spacing: -0.1px;
}

.legend li {
    height: 24.700px;
    display: flex;
    align-items: center;
    gap: 6px;
}

.sw {
    width: 10px;
    height: 10px;
    border-radius: 2px;
}

.sw-blue {
    background: #a5bfdb;
}

.sw-beige {
    background: #dfd7ba;
}

.sw-purple {
    background: #a8a4db;
}

.sw-pink {
    background: #dba4a6;
}
```
